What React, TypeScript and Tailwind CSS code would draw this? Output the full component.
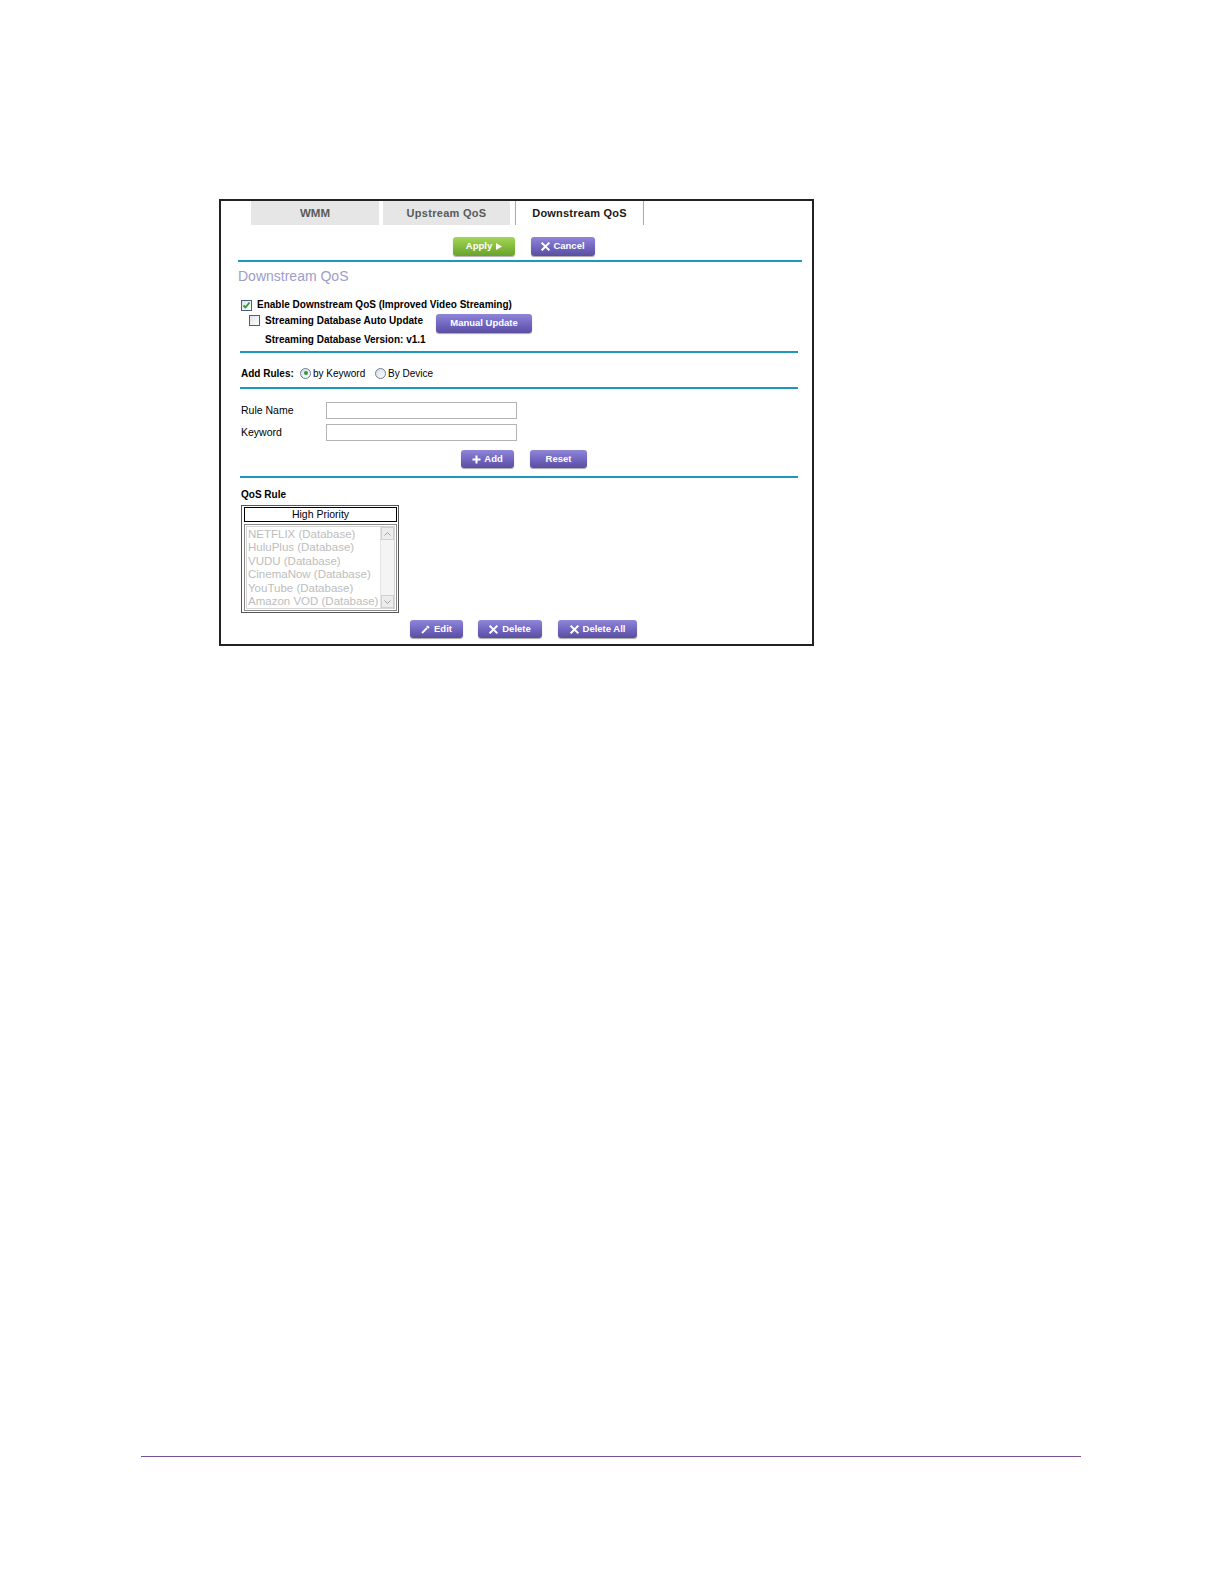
import React from "react";

const FONT = { fontFamily: '"Liberation Sans", Arial, sans-serif' };

function XIcon({ size = 8 }: { size?: number }) {
  return (
    <svg width={size} height={size} viewBox="0 0 10 10" className="shrink-0">
      <path d="M1.5 1.5 L8.5 8.5 M8.5 1.5 L1.5 8.5" stroke="white" strokeWidth="2.2" strokeLinecap="square" />
    </svg>
  );
}

function PBtn({ className, children }: { className: string; children: React.ReactNode }) {
  return (
    <div
      className={
        "flex items-center justify-center gap-[3px] rounded-[3px] bg-linear-to-b from-[#8f86d8] via-[#7368c2] to-[#5a4e9f] text-white font-bold text-[9.5px] shadow-[0_1px_1px_rgba(0,0,0,0.35)] " +
        className
      }
    >
      {children}
    </div>
  );
}

function BlueLine({ className }: { className: string }) {
  return <div className={"h-[2px] bg-[#1b97c0] " + className} />;
}

function Checkbox({ checked, className = "" }: { checked?: boolean; className?: string }) {
  return (
    <span className={"relative w-[11px] h-[11px] shrink-0 border border-[#4a5f7f] bg-linear-to-br from-[#dfe4ea] to-white " + className}>
      {checked && (
        <svg width="11" height="11" viewBox="0 0 11 11" className="absolute left-[-1px] top-[-1px]">
          <path d="M2.5 5.5 L4.5 7.5 L8.5 2.5" stroke="#2f9a2a" strokeWidth="1.8" fill="none" />
        </svg>
      )}
    </span>
  );
}

function Radio({ checked, className = "" }: { checked?: boolean; className?: string }) {
  return (
    <span className={"relative w-[11px] h-[11px] shrink-0 rounded-full border border-[#6d7d93] bg-linear-to-br from-[#d8dde4] to-white flex items-center justify-center " + className}>
      {checked && <span className="w-[4px] h-[4px] rounded-full bg-[#2e9a36]" />}
    </span>
  );
}

export default function App() {
  const items = [
    "NETFLIX (Database)",
    "HuluPlus (Database)",
    "VUDU (Database)",
    "CinemaNow (Database)",
    "YouTube (Database)",
    "Amazon VOD (Database)",
  ];
  return (
    <div className="w-[1224px] h-[1584px] bg-white text-black overflow-hidden" style={FONT}>
      <div className="pt-[199px] pl-[219px]">
        <div className="w-[595px] h-[447px] border-2 border-[#222] flex flex-col">
          {/* tabs */}
          <div className="flex h-[24px] pl-[30px] gap-[4px]">
            <div className="w-[128px] h-full bg-[#e6e6e6] flex items-center justify-center pt-px text-[11.5px] font-bold text-[#5a5a5a]">
              WMM
            </div>
            <div className="w-[127px] h-full bg-[#e6e6e6] flex items-center justify-center pt-px text-[11px] font-bold text-[#5a5a5a] tracking-[0.3px]">
              Upstream QoS
            </div>
            <div className="ml-[1px] w-[129px] h-full border-x border-[#aaaaaa] bg-white flex items-center justify-center pt-px text-[11px] font-bold text-[#1a1a1a] tracking-[0.2px]">
              Downstream QoS
            </div>
          </div>

          {/* apply / cancel */}
          <div className="mt-[12px] ml-[232px] flex gap-[16px] h-[19px]">
            <div className="w-[62px] h-full rounded-[3px] bg-linear-to-b from-[#a3d559] via-[#86bd3f] to-[#68a22d] text-white font-bold text-[9.5px] flex items-center justify-center gap-[4px] shadow-[0_1px_1px_rgba(0,0,0,0.3)]">
              <span>Apply</span>
              <svg width="6" height="7" viewBox="0 0 6 7">
                <path d="M0 0 L6 3.5 L0 7 Z" fill="white" />
              </svg>
            </div>
            <PBtn className="w-[64px] h-full gap-[1px]">
              <XIcon size={9} />
              <span>Cancel</span>
            </PBtn>
          </div>

          <BlueLine className="mt-[4px] ml-[17px] w-[564px]" />

          <div className="mt-[6px] ml-[17px] h-[16px] leading-[16px] text-[14px] text-[#9d9dca]">Downstream QoS</div>

          {/* enable */}
          <div className="mt-[14px] ml-[20px] h-[14px] flex items-center gap-[5px]">
            <Checkbox checked />
            <span className="text-[10px] font-bold leading-[14px]">Enable Downstream QoS (Improved Video Streaming)</span>
          </div>

          {/* auto update */}
          <div className="mt-[2px] ml-[28px] h-[19px] flex items-start">
            <Checkbox className="mt-[1px]" />
            <span className="ml-[5px] w-[171px] text-[10px] font-bold leading-[14px]">Streaming Database Auto Update</span>
            <PBtn className="w-[96px] h-[19px] text-[9.3px]">Manual Update</PBtn>
          </div>

          <div className="mt-[1px] ml-[44px] h-[12px] leading-[12px] text-[10px] font-bold">
            Streaming Database Version: v1.1
          </div>

          <BlueLine className="mt-[5px] ml-[19px] w-[558px]" />

          {/* add rules */}
          <div className="mt-[13px] ml-[20px] h-[14px] flex items-center text-[10px]">
            <span className="font-bold w-[59px]">Add Rules:</span>
            <Radio checked />
            <span className="ml-[2px] w-[61px]">by Keyword</span>
            <Radio className="ml-[1px]" />
            <span className="ml-[2px]">By Device</span>
          </div>

          <BlueLine className="mt-[7px] ml-[19px] w-[558px]" />

          {/* rule name */}
          <div className="mt-[13px] ml-[20px] h-[17px] flex items-center text-[10.5px]">
            <span className="w-[85px]">Rule Name</span>
            <div className="w-[191px] h-[17px] border border-[#b4b4b4] bg-white" />
          </div>
          <div className="mt-[5px] ml-[20px] h-[17px] flex items-center text-[10.5px]">
            <span className="w-[85px]">Keyword</span>
            <div className="w-[191px] h-[17px] border border-[#b4b4b4] bg-white" />
          </div>

          <div className="mt-[9px] ml-[240px] h-[18px] flex gap-[16px]">
            <PBtn className="w-[53px] h-full gap-[3px]">
              <svg width="9" height="9" viewBox="0 0 9 9">
                <path d="M4.5 0.5 V8.5 M0.5 4.5 H8.5" stroke="white" strokeWidth="2" />
              </svg>
              <span>Add</span>
            </PBtn>
            <PBtn className="w-[57px] h-full">Reset</PBtn>
          </div>

          <BlueLine className="mt-[8px] ml-[19px] w-[558px]" />

          <div className="mt-[11px] ml-[20px] h-[12px] leading-[12px] text-[10px] font-bold">QoS Rule</div>

          {/* list box */}
          <div className="mt-[4px] ml-[20px] w-[158px] h-[108px] border border-[#555] pt-[1px] pl-[2px] pr-[1px] pb-[2px] flex flex-col gap-[2px]">
            <div className="h-[15px] border border-black bg-white flex items-center justify-center text-[10.5px] leading-[13px]">
              High Priority
            </div>
            <div className="flex-1 border border-[#8a8a8a] p-px">
              <div className="h-full border border-[#d6d6d6] flex">
                <div className="flex-1 pl-[1px] pt-px text-[11.5px] leading-[13.4px] text-[#bdbdbd] whitespace-nowrap overflow-hidden">
                  {items.map((t) => (
                    <div key={t}>{t}</div>
                  ))}
                </div>
                <div className="w-[14px] h-full bg-[#f4f4f4] border-l border-[#e4e4e4] flex flex-col justify-between">
                  <div className="h-[13px] border border-[#d0d0d0] bg-[#ececec] flex items-center justify-center">
                    <svg width="7" height="4" viewBox="0 0 7 4">
                      <path d="M0.5 3.5 L3.5 0.5 L6.5 3.5" stroke="#a0a0a0" strokeWidth="1" fill="none" />
                    </svg>
                  </div>
                  <div className="h-[13px] border border-[#d0d0d0] bg-[#ececec] flex items-center justify-center">
                    <svg width="7" height="4" viewBox="0 0 7 4">
                      <path d="M0.5 0.5 L3.5 3.5 L6.5 0.5" stroke="#a0a0a0" strokeWidth="1" fill="none" />
                    </svg>
                  </div>
                </div>
              </div>
            </div>
          </div>

          {/* edit / delete */}
          <div className="mt-[7px] ml-[189px] h-[18px] flex">
            <PBtn className="w-[53px] h-full gap-[4px]">
              <svg width="9" height="9" viewBox="0 0 9 9">
                <path d="M1 8 L6 3" stroke="white" strokeWidth="1.8" />
                <path d="M5.2 1.6 L7.4 3.8 L8.6 2.2 L6.8 0.4 Z" fill="white" />
              </svg>
              <span>Edit</span>
            </PBtn>
            <PBtn className="ml-[15px] w-[64px] h-full gap-[4px]">
              <XIcon size={9} />
              <span>Delete</span>
            </PBtn>
            <PBtn className="ml-[16px] w-[79px] h-full gap-[4px]">
              <XIcon size={9} />
              <span>Delete All</span>
            </PBtn>
          </div>
        </div>
      </div>
      <div className="mt-[810px] ml-[141px] w-[940px] h-px bg-[#7b4f93]" />
    </div>
  );
}
